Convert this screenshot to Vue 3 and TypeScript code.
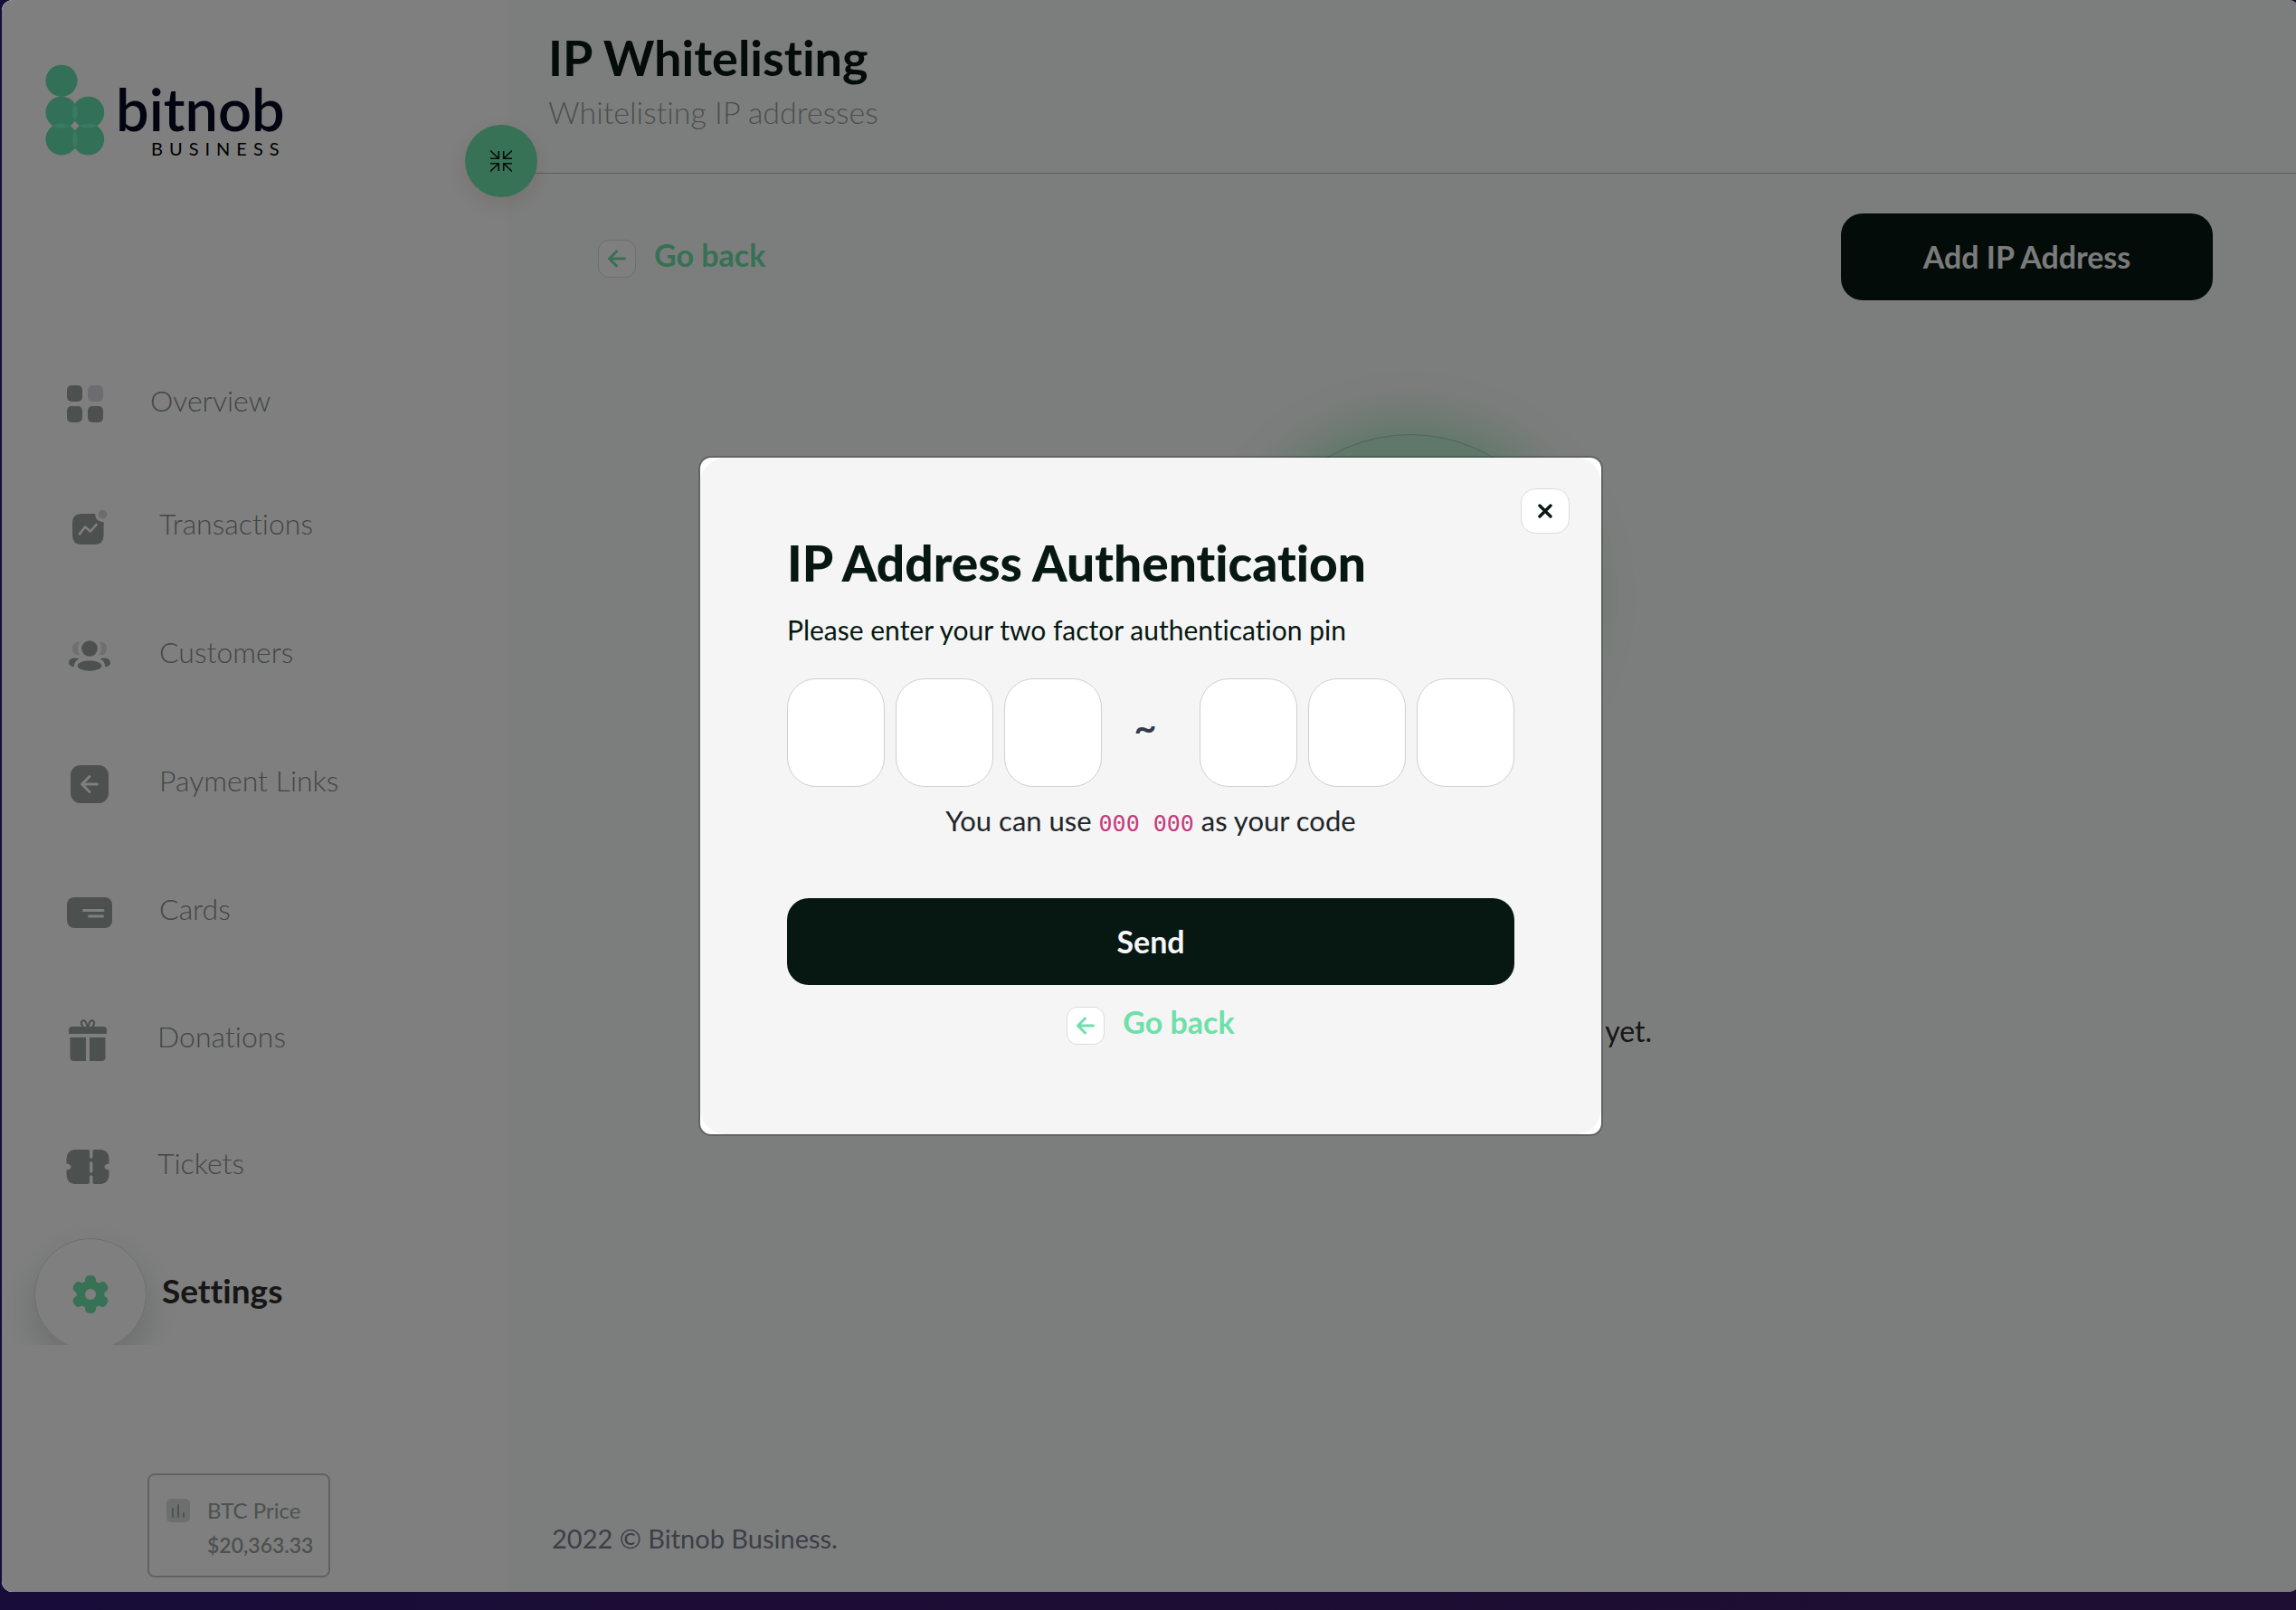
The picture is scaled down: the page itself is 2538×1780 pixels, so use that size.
<script setup lang="ts">
import { ref } from 'vue'

type IconName = 'overview' | 'transactions' | 'customers' | 'links' | 'cards' | 'donations' | 'tickets' | 'settings'

interface NavEntry {
  icon: IconName
  label: string
}

const entries: NavEntry[] = [
  { icon: 'overview', label: 'Overview' },
  { icon: 'transactions', label: 'Transactions' },
  { icon: 'customers', label: 'Customers' },
  { icon: 'links', label: 'Payment Links' },
  { icon: 'cards', label: 'Cards' },
  { icon: 'donations', label: 'Donations' },
  { icon: 'tickets', label: 'Tickets' },
  { icon: 'settings', label: 'Settings' },
]

const pin = ref<string[]>(['', '', '', '', '', ''])
</script>

<template>
  <div class="desktop">
    <div class="window">
      <aside class="sidebar">
        <div class="brand">
          <svg class="brand-mark" width="66" height="102" viewBox="0 0 66 102" aria-hidden="true">
            <g fill="#66e0b0">
              <circle cx="18" cy="18.3" r="17.6" />
              <circle cx="18" cy="53.3" r="17.6" />
              <circle cx="47.6" cy="53.3" r="17.6" />
              <circle cx="18" cy="83" r="17.6" />
              <circle cx="47.6" cy="83" r="17.6" />
            </g>
            <g fill="#74f4c6">
              <path d="M32.8 43.8A17.6 17.6 0 0 1 32.8 62.8A17.6 17.6 0 0 1 32.8 43.8Z" />
              <path d="M32.8 73.5A17.6 17.6 0 0 1 32.8 92.5A17.6 17.6 0 0 1 32.8 73.5Z" />
              <path d="M8.5 68.2A17.6 17.6 0 0 1 27.5 68.2A17.6 17.6 0 0 1 8.5 68.2Z" />
              <path d="M38.1 68.2A17.6 17.6 0 0 1 57.1 68.2A17.6 17.6 0 0 1 38.1 68.2Z" />
            </g>
          </svg>
          <div class="brand-text">
            <span class="brand-name">bitnob</span>
            <span class="brand-sub">BUSINESS</span>
          </div>
        </div>

        <nav class="nav">
          <a v-for="e in entries" :key="e.icon" href="#" class="nav-item" :class="e.icon">
            <span class="nav-icon">
              <svg v-if="e.icon === 'overview'" width="40" height="42" viewBox="0 0 40 42">
                <rect x="0" y="0" width="17" height="18" rx="5" />
                <rect x="23" y="0" width="17" height="18" rx="5" fill="#dadbde" />
                <rect x="0" y="23" width="17" height="18" rx="5" />
                <rect x="23" y="23" width="17" height="18" rx="5" />
              </svg>
              <svg v-else-if="e.icon === 'transactions'" width="40" height="40" viewBox="0 0 40 40">
                <path d="M11 5H26.300A8 8 0 0 0 35.600 13.800V29Q35.600 39 25.600 39H11Q1 39 1 29V15Q1 5 11 5Z" />
                <circle cx="34.500" cy="5.600" r="4.800" fill="#d6d8d7" />
                <path d="M9 27.500L15 19.500L21 24.500L27.500 17" fill="none" stroke="#fff" stroke-width="2.600" stroke-linecap="round" stroke-linejoin="round" />
              </svg>
              <svg v-else-if="e.icon === 'customers'" width="46" height="34" viewBox="0 0 46 34">
                <circle cx="23" cy="9" r="8.800" />
                <ellipse cx="23" cy="28" rx="13.300" ry="5.800" />
                <path d="M12.500 1.500Q9 6 10.500 12.500L12.500 16.500Q4 16.500 4 9T12.500 1.500Z" fill="#dcdedd" />
                <path d="M33.500 1.500Q37 6 35.500 12.500L33.500 16.500Q42 16.500 42 9T33.500 1.500Z" fill="#dcdedd" />
                <path d="M11.500 20.500Q6 22.500 5.800 29.200Q0 28.500 0 25Q0 19.500 6.500 19.500Q9.500 19.500 11.500 20.500Z" />
                <path d="M34.500 20.500Q40 22.500 40.200 29.200Q46 28.500 46 25Q46 19.500 39.500 19.500Q36.500 19.500 34.500 20.500Z" />
              </svg>
              <svg v-else-if="e.icon === 'links'" width="42" height="42" viewBox="0 0 42 42">
                <rect width="42" height="42" rx="11" />
                <path d="M29.500 21H13M21 12.500L12.500 21L21 29.500" fill="none" stroke="#fff" stroke-width="2.800" stroke-linecap="round" stroke-linejoin="round" />
              </svg>
              <svg v-else-if="e.icon === 'cards'" width="50" height="34" viewBox="0 0 50 34">
                <rect width="50" height="34" rx="8" />
                <path d="M18.500 14.500H40M24.500 21H39.500" stroke="#fff" stroke-width="3" stroke-linecap="round" />
              </svg>
              <svg v-else-if="e.icon === 'donations'" width="44" height="46" viewBox="0 0 44 46">
                <path d="M1 16V12Q1 8 5 8H39Q43 8 43 12V16Z" />
                <path d="M2.500 20H20V46H6.500Q2.500 46 2.500 42Z" />
                <path d="M24 20H41.500V42Q41.500 46 37.500 46H24Z" />
                <path d="M21.500 8Q20 1.200 17 1.200Q13 2.500 16.500 8M22.500 8Q24 1.200 27 1.200Q31 2.500 27.500 8" fill="none" stroke="#98a29e" stroke-width="2.200" />
              </svg>
              <svg v-else-if="e.icon === 'tickets'" width="48" height="38" viewBox="0 0 48 38">
                <path d="M9 0H24.500Q26 0 26 2V8A1.700 1.700 0 0 0 29.500 8V2Q29.500 0 31 0H39Q47 1 47.500 10V15.500Q42.500 16 42.500 19T47.500 22.500V28Q47 37 39 38H31Q29.500 38 29.500 36V30A1.700 1.700 0 0 0 26 30V36Q26 38 24.500 38H9Q1 37 .500 28V22.500Q5.500 22 5.500 19T.500 15.500V10Q1 1 9 0Z" />
                <path d="M27.750 15V24" stroke="#fff" stroke-width="3.400" stroke-linecap="round" />
              </svg>
              <svg v-else width="42" height="42" viewBox="0 0 42 42">
                <g fill="#70e4ac">
                  <circle cx="21" cy="21" r="15.500" />
                  <rect x="15" y="0" width="12" height="42" rx="5" />
                  <rect x="15" y="0" width="12" height="42" rx="5" transform="rotate(60 21 21)" />
                  <rect x="15" y="0" width="12" height="42" rx="5" transform="rotate(120 21 21)" />
                </g>
                <circle cx="21" cy="21" r="6" fill="#fff" />
              </svg>
            </span>
            <span class="nav-label">{{ e.label }}</span>
          </a>
        </nav>

        <div class="price">
          <svg width="26" height="26" viewBox="0 0 26 26" aria-hidden="true">
            <rect width="26" height="26" rx="5" fill="#d8dedb" />
            <path d="M7 11V20M13 7V20M19 16V20" stroke="#9aa39f" stroke-width="2" stroke-linecap="round" />
          </svg>
          <div class="price-text">
            <span>BTC Price</span>
            <span class="price-value">$20,363.33</span>
          </div>
        </div>

        <button class="collapse" type="button" aria-label="Collapse menu">
          <svg width="24" height="24" viewBox="0 0 24 24" fill="none" stroke="#0a1a12" stroke-width="1.600">
            <path d="M0 .500L9 9M9.300 1V9.300H0M24 .500L15 9M14.700 1V9.300H24M0 23.500L9 15M9.300 23V14.700H0M24 23.500L15 15M14.700 23V14.700H24" />
          </svg>
        </button>
      </aside>

      <main class="main">
        <header class="header">
          <h1>IP Whitelisting</h1>
          <p>Whitelisting IP addresses</p>
        </header>
        <div class="toolbar">
          <a href="#" class="back">
            <span class="back-box">
              <svg width="20" height="20" viewBox="0 0 20 20"><path d="M18.500 10H2M9.500 2L1.500 10L9.500 18" /></svg>
            </span>
            <span class="back-label">Go back</span>
          </a>
          <button type="button" class="primary add">Add IP Address</button>
        </div>
        <section class="empty">
          <div class="orb"></div>
          <p>yet.</p>
        </section>
        <footer class="footer">2022 © Bitnob Business.</footer>
      </main>

      <div class="overlay">
        <div class="modal" role="dialog" aria-labelledby="modal-title">
          <form class="panel" @submit.prevent>
            <button type="button" class="close" aria-label="Close">
              <svg width="16" height="16" viewBox="0 0 16 16"><path d="M2 2L14 14M14 2L2 14" stroke="#061811" stroke-width="3.400" stroke-linecap="round" /></svg>
            </button>
            <h2 id="modal-title">IP Address Authentication</h2>
            <p class="lead">Please enter your two factor authentication pin</p>
            <div class="pins">
              <template v-for="(_, i) in pin" :key="i">
                <span v-if="i === 3" class="tilde">~</span>
                <input v-model="pin[i]" type="text" inputmode="numeric" maxlength="1" :aria-label="'Digit ' + (i + 1)" />
              </template>
            </div>
            <p class="hint">You can use <code>000 000</code> as your code</p>
            <button type="submit" class="primary send">Send</button>
            <a href="#" class="back modal-back">
              <span class="back-box">
                <svg width="20" height="20" viewBox="0 0 20 20"><path d="M18.500 10H2M9.500 2L1.500 10L9.500 18" /></svg>
              </span>
              <span class="back-label">Go back</span>
            </a>
          </form>
        </div>
      </div>
    </div>
  </div>
</template>

<style>
body {
  margin: 0;
}
</style>

<style scoped>
.desktop {
  min-height: 100vh;
  display: flex;
  flex-direction: column;
  box-sizing: border-box;
  padding: 0 0 20px 2px;
  overflow: hidden;
  background: linear-gradient(90deg, #170c3a, #1b0d35 30%, #1f0e33);
  font-family: Lato, "Liberation Sans", sans-serif;
  font-variant-ligatures: none;
}
.desktop * {
  box-sizing: border-box;
}
h1, h2, p {
  margin: 0;
}
a {
  text-decoration: none;
}
button {
  border: 0;
  padding: 0;
  font-family: inherit;
  cursor: pointer;
}
.window {
  position: relative;
  flex: 1;
  display: flex;
  margin-right: -4px;
  border-radius: 12px;
  overflow: hidden;
  background: #f9fdfb;
}
.sidebar {
  position: relative;
  z-index: 1;
  flex: none;
  width: 560px;
  display: flex;
  flex-direction: column;
  background: #fff;
}
.brand {
  display: flex;
  gap: 12px;
  height: 382px;
  padding: 71px 0 0 48px;
}
.brand-text {
  display: flex;
  flex-direction: column;
  padding-top: 16px;
}
.brand-name {
  font-size: 65px;
  line-height: 66px;
  font-weight: 600;
  color: #040822;
}
.brand-sub {
  padding-left: 39px;
  font-size: 20px;
  line-height: 22px;
  letter-spacing: 7px;
  color: #000;
}
.nav {
  height: 1105px;
  overflow: hidden;
}
.nav-item {
  display: flex;
  align-items: center;
  gap: 52px;
  height: 142px;
  padding-left: 72px;
  font-size: 32px;
  line-height: 40px;
  font-weight: 300;
  color: #848e89;
}
.nav-icon {
  flex: none;
  display: flex;
  justify-content: center;
  width: 50px;
  fill: #98a29e;
}
.nav-label {
  padding-bottom: 8px;
}
.nav-item.overview {
  height: 130px;
}
.nav-item.overview .nav-icon {
  width: 40px;
}
.nav-item.donations,
.nav-item.tickets {
  height: 140px;
  padding-left: 70px;
}
.nav-item.settings {
  gap: 17px;
  padding-left: 36px;
  font-size: 37px;
  font-weight: 700;
  color: #2c2c2c;
}
.nav-item.settings .nav-icon {
  align-items: center;
  width: 124px;
  height: 124px;
  border: 1px solid #dde1df;
  border-radius: 50%;
  background: #fff;
  box-shadow: 0 16px 40px rgba(60, 110, 90, 0.24);
}
.price {
  display: flex;
  gap: 19px;
  width: 202px;
  margin: auto 0 16px 161px;
  padding: 20px 0 15px 19px;
  border: 2px solid #c2c4c3;
  border-radius: 8px;
}
.price svg {
  flex: none;
  margin-top: 6px;
}
.price-text {
  display: flex;
  flex-direction: column;
  font-size: 24px;
  line-height: 38px;
  color: #9aa39f;
}
.price-value {
  font-size: 23px;
  font-weight: 600;
}
.collapse {
  position: absolute;
  top: 138px;
  left: 512px;
  width: 80px;
  height: 80px;
  display: flex;
  align-items: center;
  justify-content: center;
  border-radius: 50%;
  background: #70e4ac;
  box-shadow: 0 8px 24px rgba(150, 70, 40, 0.14);
}
.main {
  flex: 1;
  display: flex;
  flex-direction: column;
}
.header {
  height: 192px;
  padding: 32px 44px 0;
  border-bottom: 1px solid #b4b8b6;
}
.header h1 {
  margin-bottom: 8px;
  font-size: 54px;
  line-height: 64px;
  font-weight: 700;
  color: #061811;
}
.header p {
  font-size: 34px;
  line-height: 40px;
  font-weight: 300;
  color: #989c9a;
}
.toolbar {
  display: flex;
  align-items: flex-start;
  justify-content: space-between;
  padding: 44px 96px 0 99px;
}
.back {
  display: flex;
  align-items: center;
  gap: 20px;
  font-size: 34px;
  line-height: 32px;
  font-weight: 700;
  color: #6ee0a9;
}
.toolbar .back {
  margin-top: 29px;
}
.back-box {
  display: flex;
  align-items: center;
  justify-content: center;
  width: 42px;
  height: 42px;
  border: 1px solid #dadcdb;
  border-radius: 12px;
  background: #fff;
}
.back-box svg {
  fill: none;
  stroke: #6ee0a9;
  stroke-width: 3;
  stroke-linecap: round;
  stroke-linejoin: round;
}
.back-label {
  padding-bottom: 8px;
}
.primary {
  height: 96px;
  border-radius: 24px;
  background: #061811;
  font-size: 34px;
  line-height: 40px;
  font-weight: 700;
  color: #f6f6f8;
}
.add {
  width: 411px;
}
.empty {
  flex: 1;
  display: flex;
  flex-direction: column;
  align-items: center;
  padding-top: 148px;
}
.orb {
  flex: none;
  width: 360px;
  height: 360px;
  margin-left: 14px;
  border: 1px solid #a0c8b2;
  border-radius: 50%;
  background: #bef0d2;
  box-shadow: 0 0 50px 18px #bef0d2, 0 0 120px 50px rgba(200, 120, 120, 0.04);
}
.empty p {
  width: 548px;
  margin-top: 280px;
  font-size: 32px;
  line-height: 40px;
  text-align: right;
  color: #2c2c2c;
}
.footer {
  padding: 0 48px 39px;
  font-size: 29px;
  line-height: 40px;
  color: #7a7c90;
}
.overlay {
  position: absolute;
  z-index: 2;
  inset: 0;
  display: flex;
  align-items: center;
  justify-content: center;
  background: rgba(0, 0, 0, 0.5);
}
.modal {
  width: 1000px;
  border: 2px solid rgba(0, 0, 0, 0.2);
  border-radius: 14px;
  background: #fff;
  background-clip: padding-box;
}
.panel {
  position: relative;
  display: flex;
  flex-direction: column;
  padding: 84px 96px 99px;
  border-radius: 28px;
  background: #f5f5f5;
}
.close {
  position: absolute;
  top: 34px;
  right: 35px;
  width: 54px;
  height: 50px;
  display: flex;
  align-items: center;
  justify-content: center;
  border: 1px solid #dadcdb;
  border-radius: 16px;
  background: #fff;
}
.panel h2 {
  font-size: 55px;
  line-height: 64px;
  font-weight: 900;
  color: #061811;
}
.lead {
  margin-top: 22px;
  font-size: 30px;
  line-height: 40px;
  color: #061811;
}
.pins {
  display: flex;
  gap: 12px;
  margin-top: 34px;
}
.pins input {
  flex: 1;
  min-width: 0;
  height: 120px;
  border: 1px solid #ced0d4;
  border-radius: 32px;
  background: #fff;
  font: inherit;
  font-size: 40px;
  text-align: center;
}
.tilde {
  width: 84px;
  padding-right: 12px;
  font-size: 44px;
  line-height: 106px;
  font-weight: 600;
  text-align: center;
  color: #333d4d;
}
.hint {
  margin-top: 17px;
  font-size: 31px;
  line-height: 40px;
  text-align: center;
  color: #212529;
}
.hint code {
  font-family: "DejaVu Sans Mono", monospace;
  font-size: 25px;
  line-height: 32px;
  color: #c73a7c;
}
.send {
  margin-top: 66px;
}
.modal-back {
  align-self: center;
  margin-top: 24px;
}
</style>
